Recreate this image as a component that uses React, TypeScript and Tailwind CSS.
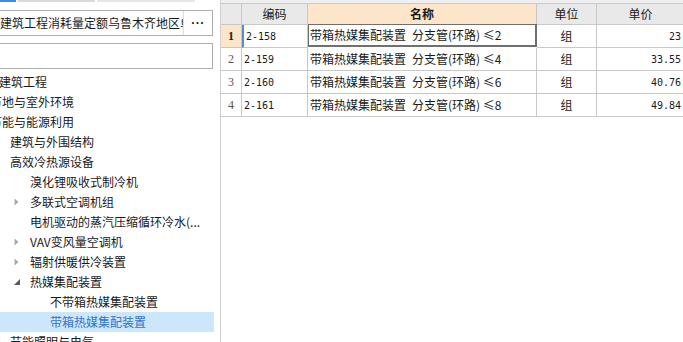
import { ReactNode } from 'react';

type TreeRow = {
  text: string;
  indent: string;
  arrow?: 'right' | 'down';
  selected?: boolean;
};

const tree: TreeRow[] = [
  { text: '建筑工程', indent: 'ml-[-1px]' },
  { text: '节地与室外环境', indent: 'ml-[-10px]' },
  { text: '节能与能源利用', indent: 'ml-[-10px]' },
  { text: '建筑与外围结构', indent: 'pl-[10px]' },
  { text: '高效冷热源设备', indent: 'pl-[10px]' },
  { text: '溴化锂吸收式制冷机', indent: 'pl-[30px]' },
  { text: '多联式空调机组', indent: 'pl-[14px]', arrow: 'right' },
  { text: '电机驱动的蒸汽压缩循环冷水(...', indent: 'pl-[30px]' },
  { text: 'VAV变风量空调机', indent: 'pl-[14px]', arrow: 'right' },
  { text: '辐射供暖供冷装置', indent: 'pl-[14px]', arrow: 'right' },
  { text: '热媒集配装置', indent: 'pl-[14px]', arrow: 'down' },
  { text: '不带箱热媒集配装置', indent: 'pl-[50px]' },
  { text: '带箱热媒集配装置', indent: 'pl-[50px]', selected: true },
  { text: '节能照明与电气', indent: 'pl-[10px]' },
];

const rows = [
  { n: '1', code: '2-158', name: '分支管(环路) ≤2', price: '23' },
  { n: '2', code: '2-159', name: '分支管(环路) ≤4', price: '33.55' },
  { n: '3', code: '2-160', name: '分支管(环路) ≤6', price: '40.76' },
  { n: '4', code: '2-161', name: '分支管(环路) ≤8', price: '49.84' },
];

function Arrow({ dir }: { dir: 'right' | 'down' }) {
  return (
    <div className="w-[16px] h-[20px] flex items-center shrink-0">
      {dir === 'right' ? (
        <svg width="5" height="8" viewBox="0 0 5 8">
          <path d="M0.5 0.5 L4.5 4 L0.5 7.5 Z" fill="#a8a8a8" />
        </svg>
      ) : (
        <svg width="6" height="6" viewBox="0 0 6 6">
          <path d="M6 0 L6 6 L0 6 Z" fill="#5a5a5a" />
        </svg>
      )}
    </div>
  );
}

function Cell({ children, className }: { children?: ReactNode; className: string }) {
  return <div className={`flex items-center overflow-hidden whitespace-nowrap ${className}`}>{children}</div>;
}

export default function App() {
  const cjk = "font-['Noto_Sans_CJK_SC',sans-serif]";
  const num = "font-['DejaVu_Sans_Mono',monospace] text-[10px]";

  return (
    <div className={`w-[683px] h-[342px] overflow-hidden flex bg-white text-[#1a1a1a] ${cjk} text-[12px]`}>
      {/* left tree panel */}
      <div className="w-[220px] shrink-0 flex flex-col overflow-hidden">
        <div className="h-[2px] flex shrink-0">
          <div className="w-[16px] bg-[#3c8de6]" />
          <div className="w-[2px]" />
          <div className="w-[77px] bg-[#d9d9d9]" />
          <div className="w-[2px]" />
          <div className="w-[98px] bg-[#e6e6e6]" />
        </div>

        <div className="mt-[8px] ml-[-10px] w-[223px] h-[26px] shrink-0 flex border border-[#adadad] bg-white">
          <div className="flex-1 min-w-0 overflow-hidden whitespace-nowrap pl-[9px] leading-[24px]">
            建筑工程消耗量定额乌鲁木齐地区单位估价表
          </div>
          <div className="w-[29px] shrink-0 border-l border-[#dedede] flex items-center justify-center font-['Liberation_Sans',sans-serif] font-bold text-[12px] tracking-[0.5px] leading-none">
            ···
          </div>
        </div>
        <div className="mt-[7px] ml-[-10px] w-[223px] h-[26px] shrink-0 border border-[#adadad] bg-white" />

        <div className="mt-[3px] flex flex-col">
          {tree.map((r) => (
            <div
              key={r.text}
              className={`h-[20px] w-[214px] shrink-0 flex items-center whitespace-nowrap ${r.indent} ${
                r.selected ? 'bg-[#cce6fc] text-[#3474c9]' : ''
              }`}
            >
              {r.arrow && <Arrow dir={r.arrow} />}
              <span className="leading-[20px]">{r.text}</span>
            </div>
          ))}
        </div>
      </div>

      {/* right grid panel */}
      <div className="flex-1 border-l border-[#cfcfcf] overflow-hidden flex flex-col">
        <div className="h-[3px] bg-[#f0f0f0] shrink-0" />
        <div className="grid grid-cols-[21px_66px_229px_60px_88px] w-[464px] shrink-0">
          <Cell className="h-[22px] bg-[#e9e9e9] border-t border-r border-b border-[#c8c8c8]" />
          <Cell className="h-[22px] bg-[#e9e9e9] border-t border-r border-b border-[#c8c8c8] justify-center">编码</Cell>
          <Cell className="h-[22px] bg-[#fde5c9] border-t border-r border-b border-[#c8c8c8] justify-center font-bold">名称</Cell>
          <Cell className="h-[22px] bg-[#e9e9e9] border-t border-r border-b border-[#c8c8c8] justify-center">单位</Cell>
          <Cell className="h-[22px] bg-[#e9e9e9] border-t border-r border-b border-[#c8c8c8] justify-center">单价</Cell>

          {rows.map((r, i) => {
            const first = i === 0;
            return [
              <Cell
                key={r.n + 'n'}
                className={`h-[23px] border-r border-b border-[#c8c8c8] justify-center font-['Liberation_Serif',serif] text-[12px] ${
                  first ? 'bg-[#fde5c9] font-bold text-[#222]' : 'text-[#555]'
                }`}
              >
                {r.n}
              </Cell>,
              <Cell
                key={r.n + 'c'}
                className={`h-[23px] border-r border-b border-[#c8c8c8] pl-[2px] ${num} ${
                  first ? 'border-l-2 border-l-[#4a8fe2] pl-0' : ''
                }`}
              >
                {r.code}
              </Cell>,
              <Cell
                key={r.n + 'm'}
                className={`h-[23px] pl-[2px] ${
                  first
                    ? 'border-l border-t border-r-2 border-b-2 border-[#6f6f6f] -mt-px pl-px'
                    : 'border-r border-b border-[#c8c8c8]'
                }`}
              >
                带箱热媒集配装置{'\u2002'}{r.name}
              </Cell>,
              <Cell key={r.n + 'u'} className="h-[23px] border-r border-b border-[#c8c8c8] justify-center">
                组
              </Cell>,
              <Cell key={r.n + 'p'} className={`h-[23px] border-r border-b border-[#c8c8c8] justify-end pr-[3px] ${num}`}>
                {r.price}
              </Cell>,
            ];
          })}
        </div>
      </div>
    </div>
  );
}
